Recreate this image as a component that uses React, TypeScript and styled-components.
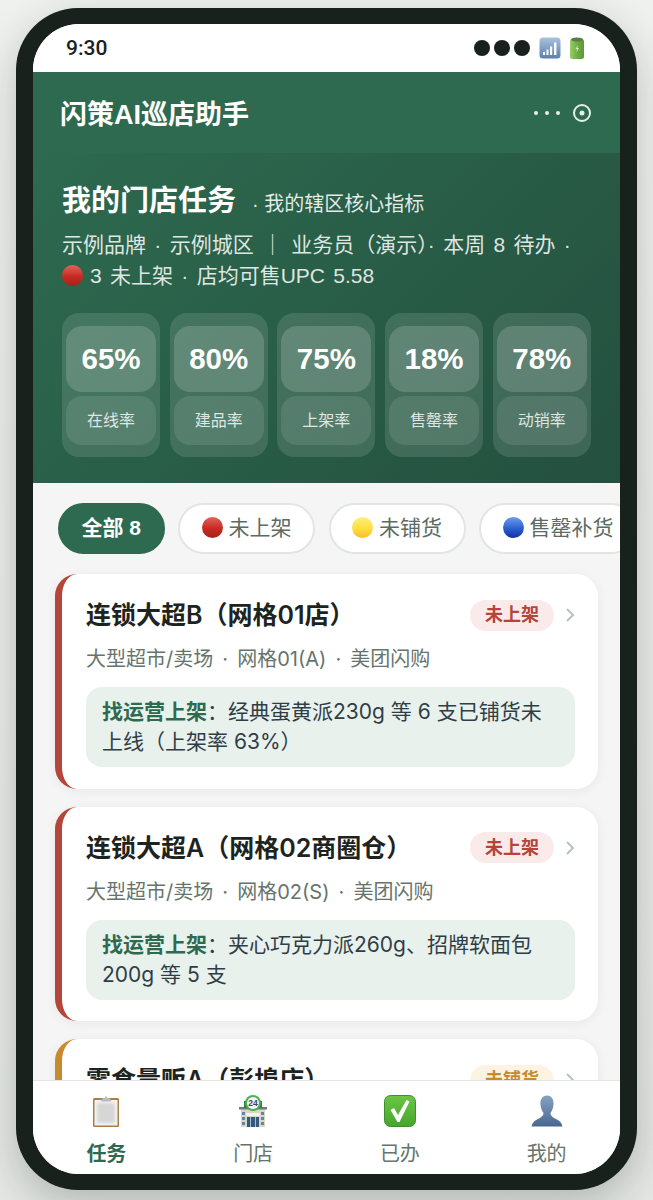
import React from 'react'
import styled, { createGlobalStyle } from 'styled-components'

const GlobalStyle = createGlobalStyle`
	html, body {
		margin: 0;
		padding: 0;
		background: #eef0ee;
	}
	* {
		box-sizing: border-box;
	}
	body {
		font-family: "Liberation Sans", "Noto Sans CJK SC", sans-serif;
	}
`

const Page = styled.div`
	width: 653px;
	height: 1200px;
	padding: 8px 16px 10px;
	background: linear-gradient(180deg, #eff1ef 0%, #e9ebe9 60%, #e4e7e4 100%);
	overflow: hidden;
`

const Phone = styled.div`
	height: 1182px;
	padding: 16px 17px;
	border-radius: 62px;
	background: #18211c;
	box-shadow: 0 14px 40px rgba(24, 33, 28, 0.24);
`

const Screen = styled.div`
	height: 100%;
	display: flex;
	flex-direction: column;
	border-radius: 46px;
	background: #f5f5f5;
	overflow: hidden;
`

const StatusBar = styled.div`
	flex: none;
	height: 48px;
	padding: 0 35px 0 33px;
	display: flex;
	align-items: center;
	justify-content: space-between;
	background: #fff;
`

const Time = styled.span`
	font-family: Roboto, sans-serif;
	font-size: 21px;
	font-weight: 500;
	color: #18211c;
`

const StatusIcons = styled.div`
	display: flex;
	align-items: center;
	gap: 4px;
`

const StatusDot = styled.span`
	width: 16px;
	height: 16px;
	border-radius: 50%;
	background: #18211c;
`

const Header = styled.header`
	flex: none;
	height: 81px;
	padding: 0 28px 0 27px;
	display: flex;
	align-items: center;
	justify-content: space-between;
	background: #2d6a4f;
`

const AppTitle = styled.h1`
	margin: 0;
	font-size: 27px;
	font-weight: 700;
	color: #fff;
`

const HeaderActions = styled.div`
	display: flex;
	align-items: center;
	gap: 11px;
`

const Hero = styled.section`
	flex: none;
	height: 330px;
	padding: 28px 29px 0;
	background: linear-gradient(135deg, #2d6a4f 0%, #24503f 100%);
	color: #fff;
`

const HeroTitleRow = styled.div`
	display: flex;
	align-items: baseline;
	gap: 16px;
`

const HeroTitle = styled.h2`
	margin: 0;
	font-size: 29px;
	line-height: 40px;
	font-weight: 700;
`

const HeroSub = styled.span`
	font-size: 20px;
	color: rgba(255, 255, 255, 0.88);
`

const HeroMeta = styled.p`
	margin: 8px 0 0;
	font-size: 21px;
	line-height: 31px;
	word-spacing: 2.5px;
	color: rgba(255, 255, 255, 0.86);
`

const StatRow = styled.div`
	margin-top: 22px;
	display: flex;
	gap: 9.7px;
`

const StatCard = styled.div`
	width: 98px;
	height: 144px;
	padding: 13px 4px 12px;
	display: flex;
	flex-direction: column;
	gap: 4px;
	border-radius: 17px;
	background: rgba(255, 255, 255, 0.12);
`

const StatValue = styled.div`
	height: 66px;
	display: flex;
	align-items: center;
	justify-content: center;
	border-radius: 16px;
	background: rgba(255, 255, 255, 0.16);
	font-size: 29.5px;
	font-weight: 700;
`

const StatLabel = styled.div`
	flex: 1;
	padding-bottom: 3px;
	display: flex;
	align-items: center;
	justify-content: center;
	border-radius: 16px;
	background: rgba(255, 255, 255, 0.1);
	font-size: 16px;
	color: rgba(255, 255, 255, 0.82);
`

const Content = styled.div`
	flex: 1;
	min-height: 0;
	overflow: hidden;
`

const ChipRow = styled.div`
	padding: 20px 0 20px 25px;
	display: flex;
	gap: 13.5px;
`

const Chip = styled.div<{ $active?: boolean }>`
	flex: none;
	height: 51px;
	padding: 0 21.5px 2px;
	display: flex;
	align-items: center;
	gap: 6px;
	border-radius: 26px;
	border: 2px solid ${p => (p.$active ? '#2d6a4f' : '#e2e6e3')};
	background: ${p => (p.$active ? '#2d6a4f' : '#fff')};
	font-size: 21px;
	line-height: 1;
	font-weight: ${p => (p.$active ? 700 : 400)};
	color: ${p => (p.$active ? '#fff' : '#5c6b63')};
`

const Ball = styled.span<{ $light: string; $mid: string; $dark: string }>`
	flex: none;
	display: inline-block;
	width: 21px;
	height: 21px;
	border-radius: 50%;
	background: linear-gradient(180deg, ${p => p.$light} 0%, ${p => p.$mid} 55%, ${p => p.$dark} 100%);
`

const InlineBall = styled(Ball)`
	vertical-align: -3px;
	margin-right: 7px;
`

const CardList = styled.div`
	padding: 0 22px;
	display: flex;
	flex-direction: column;
	gap: 18px;
`

const Card = styled.article<{ $accent: string }>`
	flex: none;
	height: 214.5px;
	padding: 20px 23px 0 24px;
	border-left: 7px solid ${p => p.$accent};
	border-radius: 22px;
	background: #fff;
	box-shadow: 0 2px 12px rgba(24, 33, 28, 0.06);
	font-family: Inter, "Noto Sans CJK SC", sans-serif;
`

const CardTop = styled.div`
	display: flex;
	align-items: center;
`

const CardTitle = styled.h3`
	flex: 1;
	margin: 0;
	font-size: 25px;
	line-height: 42px;
	font-weight: 600;
	color: #1d2420;
`

const Badge = styled.span<{ $bg: string; $fg: string }>`
	height: 31px;
	padding: 0 15px;
	display: flex;
	align-items: center;
	border-radius: 16px;
	background: ${p => p.$bg};
	color: ${p => p.$fg};
	font-size: 18px;
	line-height: 1;
	font-weight: 700;
`

const Chevron = styled.svg`
	flex: none;
	margin-left: 11px;
`

const CardSub = styled.div`
	margin-top: 9px;
	font-size: 20px;
	line-height: 28px;
	word-spacing: 3.5px;
	color: #66746c;
`

const Note = styled.div`
	margin-top: 14px;
	height: 80px;
	padding: 10px 16px;
	border-radius: 16px;
	background: #e9f1ed;
	font-size: 21px;
	line-height: 30px;
	color: #2f3e46;
`

const NoteLead = styled.strong`
	font-weight: 700;
	color: #2d6a4f;
`

const TabBar = styled.nav`
	flex: none;
	height: 94px;
	display: grid;
	grid-template-columns: repeat(4, 1fr);
	border-top: 1px solid #e2e6e3;
	background: #fff;
`

const Tab = styled.div<{ $active?: boolean }>`
	padding-top: 14px;
	display: flex;
	flex-direction: column;
	align-items: center;
	font-size: 20px;
	font-weight: ${p => (p.$active ? 700 : 400)};
	color: ${p => (p.$active ? '#2d6a4f' : '#66746c')};
`

const TabIcon = styled.svg`
	display: block;
	margin-bottom: 11px;
`

const SignalIcon = () => (
	<svg width="22" height="22" viewBox="0 0 22 22" style={{ marginLeft: 5 }}>
		<defs>
			<linearGradient id="sig" x1="0" y1="0" x2="0" y2="1">
				<stop offset="0" stopColor="#a9c2de" />
				<stop offset="1" stopColor="#5c7fab" />
			</linearGradient>
		</defs>
		<rect x="0.5" y="0.5" width="21" height="21" rx="3.5" fill="url(#sig)" />
		<rect x="4" y="15" width="2" height="3" fill="#fff" />
		<rect x="7.5" y="12.5" width="2" height="5.5" fill="#fff" />
		<rect x="11" y="9.5" width="2.2" height="8.5" fill="#fff" />
		<rect x="15" y="5.5" width="2.4" height="12.5" fill="#fff" />
	</svg>
)

const BatteryIcon = () => (
	<svg width="16" height="22" viewBox="0 0 16 22" style={{ marginLeft: 4 }}>
		<defs>
			<linearGradient id="bat" x1="0" y1="0" x2="1" y2="0">
				<stop offset="0" stopColor="#9ccb6a" />
				<stop offset="0.5" stopColor="#6fae42" />
				<stop offset="1" stopColor="#5c9a38" />
			</linearGradient>
		</defs>
		<rect x="1" y="2" width="14" height="20" rx="2.5" fill="url(#bat)" />
		<ellipse cx="8" cy="2.5" rx="6" ry="2" fill="#587d4a" />
		<path d="M8.8 8 L6.5 12 H8.2 L7.4 15.5 L10 11 H8.3 Z" fill="#d9ecc8" />
	</svg>
)

const ClipboardIcon = () => (
	<TabIcon width="32" height="32" viewBox="0 0 32 32">
		<defs>
			<filter id="soft">
				<feGaussianBlur stdDeviation="1.5" />
			</filter>
		</defs>
		<rect x="3" y="3" width="26" height="29" rx="1.5" fill="#a97c48" />
		<rect x="4.5" y="5" width="23" height="25.5" fill="#f4f4f4" />
		<rect x="7" y="8" width="18" height="20" fill="#d6d6d6" filter="url(#soft)" />
		<path d="M11 5 L13 3 L14.5 3 Q16 -0.5 17.5 3 L19 3 L21 5 V6.5 H11 Z" fill="#b7bcc2" />
	</TabIcon>
)

const StoreIcon = () => (
	<TabIcon width="32" height="32" viewBox="0 0 32 32">
		<rect x="4" y="13" width="24" height="19" fill="#d9d6c3" />
		<rect x="2" y="12" width="28" height="2.5" fill="#6f7a85" />
		<rect x="7" y="6" width="18" height="7" fill="#2f7d3c" />
		<circle cx="16" cy="8" r="8" fill="#4caf50" />
		<circle cx="16" cy="8" r="6" fill="#f3f5f4" />
		<text x="16" y="11" textAnchor="middle" fontSize="8.5" fontWeight="700" fill="#3d4270" fontFamily="Liberation Sans">24</text>
		<rect x="9" y="18" width="14" height="3" fill="#f7f4e6" />
		<rect x="10" y="22" width="12" height="10" fill="#34597e" />
		<rect x="13" y="22" width="1" height="10" fill="#a5bdd2" />
		<rect x="18" y="22" width="1" height="10" fill="#a5bdd2" />
		<rect x="5" y="17" width="3" height="3" fill="#5d86a8" />
		<rect x="5" y="22" width="3" height="3" fill="#5d86a8" />
		<rect x="5" y="27" width="3" height="3" fill="#5d86a8" />
		<rect x="24" y="17" width="3" height="3" fill="#5d86a8" />
		<rect x="24" y="22" width="3" height="3" fill="#5d86a8" />
		<rect x="24" y="27" width="3" height="3" fill="#5d86a8" />
	</TabIcon>
)

const CheckIcon = () => (
	<TabIcon width="32" height="32" viewBox="0 0 32 32">
		<defs>
			<linearGradient id="chk" x1="0" y1="0" x2="0" y2="1">
				<stop offset="0" stopColor="#6cc644" />
				<stop offset="1" stopColor="#46a52e" />
			</linearGradient>
		</defs>
		<rect x="0.5" y="0.5" width="31" height="31" rx="6" fill="url(#chk)" stroke="#3c8f2a" />
		<path d="M6.5 15 L10 13 L14 20 L22.5 5 L25.5 6.5 L15.5 27 L13.5 27 Z" fill="#fff" />
	</TabIcon>
)

const PersonIcon = () => (
	<TabIcon width="32" height="32" viewBox="0 0 32 32">
		<defs>
			<linearGradient id="usr" x1="0" y1="0" x2="0" y2="1">
				<stop offset="0" stopColor="#86a2c2" />
				<stop offset="1" stopColor="#49688f" />
			</linearGradient>
		</defs>
		<path
			d="M16 0.5 C21 0.5 23 5 22.5 10 C22 14 20.5 16.5 19.5 18 C19.5 21 22 22.5 25 24 C28.5 25.5 30.5 27.5 31.5 31.5 H0.5 C1.5 27.5 3.5 25.5 7 24 C10 22.5 12.5 21 12.5 18 C11.5 16.5 10 14 9.5 10 C9 5 11 0.5 16 0.5 Z"
			fill="url(#usr)"
		/>
	</TabIcon>
)

const red = { $light: '#e0645c', $mid: '#c82a22', $dark: '#a3231b' }
const yellow = { $light: '#fff07a', $mid: '#ffdf40', $dark: '#f5bd2c' }
const blue = { $light: '#6f9bef', $mid: '#2a5fd0', $dark: '#14309e' }

const stats = [
	{ value: '65%', label: '在线率' },
	{ value: '80%', label: '建品率' },
	{ value: '75%', label: '上架率' },
	{ value: '18%', label: '售罄率' },
	{ value: '78%', label: '动销率' },
]

const stores = [
	{
		name: '连锁大超B（网格01店）',
		sub: '大型超市/卖场 · 网格01(A) · 美团闪购',
		lead: '找运营上架',
		note: '：经典蛋黄派230g 等 6 支已铺货未上线（上架率 63%）',
		status: '未上架',
		accent: '#b5443a',
		bg: '#fbeaea',
		fg: '#b5443a',
	},
	{
		name: '连锁大超A（网格02商圈仓）',
		sub: '大型超市/卖场 · 网格02(S) · 美团闪购',
		lead: '找运营上架',
		note: '：夹心巧克力派260g、招牌软面包200g 等 5 支',
		status: '未上架',
		accent: '#b5443a',
		bg: '#fbeaea',
		fg: '#b5443a',
	},
	{
		name: '零食量贩A（彭埠店）',
		sub: '零食量贩 · 网格03(A) · 美团闪购',
		lead: '找业务铺货',
		note: '：经典蛋黄派230g 等 4 支未铺货',
		status: '未铺货',
		accent: '#c98a2e',
		bg: '#fdf3e3',
		fg: '#c98a2e',
	},
]

export default function App() {
	return (
		<Page>
			<GlobalStyle />
			<Phone>
				<Screen>
					<StatusBar>
						<Time>9:30</Time>
						<StatusIcons>
							<StatusDot />
							<StatusDot />
							<StatusDot />
							<SignalIcon />
							<BatteryIcon />
						</StatusIcons>
					</StatusBar>
					<Header>
						<AppTitle>闪策AI巡店助手</AppTitle>
						<HeaderActions>
							<svg width="28" height="6" viewBox="0 0 28 6">
								<circle cx="3" cy="3" r="2" fill="#e6efe9" />
								<circle cx="14" cy="3" r="2" fill="#e6efe9" />
								<circle cx="25" cy="3" r="2" fill="#e6efe9" />
							</svg>
							<svg width="20" height="20" viewBox="0 0 20 20">
								<circle cx="10" cy="10" r="8" fill="none" stroke="#e6efe9" strokeWidth="2" />
								<circle cx="10" cy="10" r="2.5" fill="#e6efe9" />
							</svg>
						</HeaderActions>
					</Header>
					<Content>
						<Hero>
							<HeroTitleRow>
								<HeroTitle>我的门店任务</HeroTitle>
								<HeroSub>· 我的辖区核心指标</HeroSub>
							</HeroTitleRow>
							<HeroMeta>
								示例品牌 · 示例城区 ｜ 业务员（演示）· 本周 8 待办 ·
								<br />
								<InlineBall {...red} />3 未上架 · 店均可售UPC 5.58
							</HeroMeta>
							<StatRow>
								{stats.map(s => (
									<StatCard key={s.label}>
										<StatValue>{s.value}</StatValue>
										<StatLabel>{s.label}</StatLabel>
									</StatCard>
								))}
							</StatRow>
						</Hero>
						<ChipRow>
							<Chip $active>全部 8</Chip>
							<Chip>
								<Ball {...red} />
								未上架
							</Chip>
							<Chip>
								<Ball {...yellow} />
								未铺货
							</Chip>
							<Chip>
								<Ball {...blue} />
								售罄补货
							</Chip>
						</ChipRow>
						<CardList>
							{stores.map(s => (
								<Card key={s.name} $accent={s.accent}>
									<CardTop>
										<CardTitle>{s.name}</CardTitle>
										<Badge $bg={s.bg} $fg={s.fg}>
											{s.status}
										</Badge>
										<Chevron width="10" height="16" viewBox="0 0 10 16">
											<path d="M2 2 L8 8 L2 14" fill="none" stroke="#b9c0bc" strokeWidth="2" />
										</Chevron>
									</CardTop>
									<CardSub>{s.sub}</CardSub>
									<Note>
										<NoteLead>{s.lead}</NoteLead>
										{s.note}
									</Note>
								</Card>
							))}
						</CardList>
					</Content>
					<TabBar>
						<Tab $active>
							<ClipboardIcon />
							任务
						</Tab>
						<Tab>
							<StoreIcon />
							门店
						</Tab>
						<Tab>
							<CheckIcon />
							已办
						</Tab>
						<Tab>
							<PersonIcon />
							我的
						</Tab>
					</TabBar>
				</Screen>
			</Phone>
		</Page>
	)
}
